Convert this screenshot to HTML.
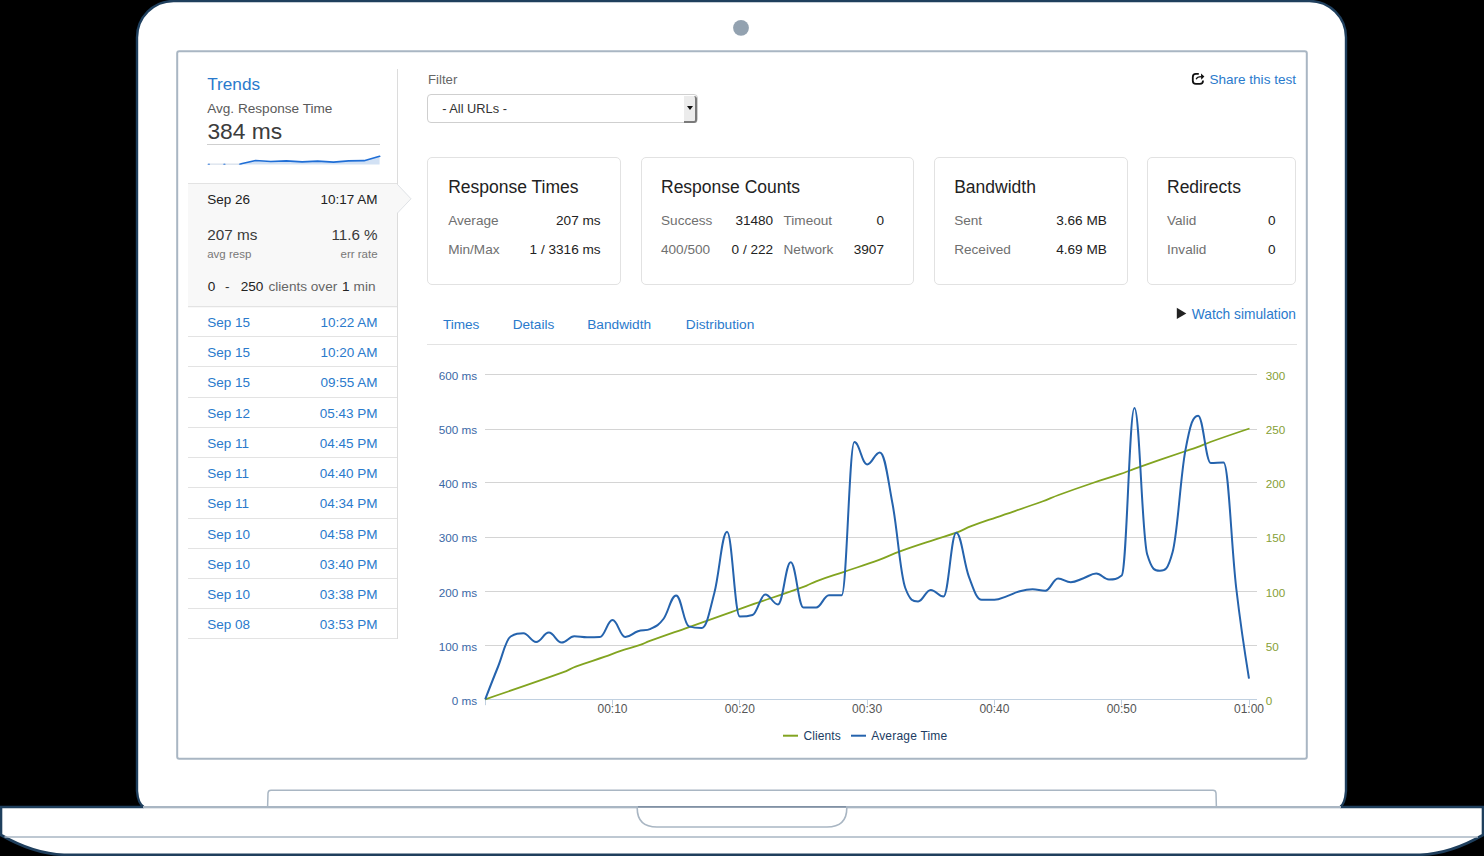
<!DOCTYPE html>
<html><head><meta charset="utf-8"><title>Load test report</title>
<style>
html,body{margin:0;padding:0;background:#000;}
body{width:1484px;height:856px;position:relative;overflow:hidden;font-family:"Liberation Sans", sans-serif;}
svg{position:absolute;left:0;top:0;}
.t{position:absolute;white-space:nowrap;line-height:1;}
</style></head><body>
<svg width="1484" height="856" viewBox="0 0 1484 856" font-family="Liberation Sans, sans-serif">
<path d="M1,807 L1483,807 L1483,835 Q1450,854 1420,854.8 L64,854.8 Q34,854 1,835 Z" fill="#fff" stroke="#1f3f5d" stroke-width="2.6"/>
<path d="M144,807 Q138,804 137,791 L137,37.5 A36.5,36.5 0 0 1 173.5,1 L1309.5,1 A36.5,36.5 0 0 1 1346,37.5 L1346,791 Q1345,804 1340,807" fill="#fff" stroke="#1f3f5d" stroke-width="2.4"/>
<line x1="144" y1="807" x2="1340" y2="807" stroke="#fff" stroke-width="3"/>
<line x1="143" y1="807" x2="1341" y2="807" stroke="#a9b6c3" stroke-width="1.8"/>
<line x1="4.5" y1="837" x2="1478" y2="837" stroke="#a9b6c3" stroke-width="1.6"/>
<path d="M267.6,807 L268,793 Q268.3,790.3 271,790.3 L1213,790.3 Q1215.7,790.3 1216,793 L1216.4,807" fill="none" stroke="#a9b6c3" stroke-width="1.5"/>
<path d="M637.2,807 L637.2,808 Q637.2,827 657,827 L827,827 Q846.8,827 846.8,808 L846.8,807" fill="#fff" stroke="#a9b6c3" stroke-width="1.6"/>
<line x1="638" y1="807" x2="846" y2="807" stroke="#73859a" stroke-width="1.6"/>
<circle cx="741" cy="27.8" r="7.9" fill="#93a2b0"/>
<rect x="177.2" y="51.2" width="1129.6" height="707.6" rx="2" fill="#fff" stroke="#a9b6c3" stroke-width="2"/>
<line x1="485" y1="374.5" x2="1257" y2="374.5" stroke="#d4d4d4" stroke-width="1"/>
<line x1="485" y1="429.5" x2="1257" y2="429.5" stroke="#d4d4d4" stroke-width="1"/>
<line x1="485" y1="482.5" x2="1257" y2="482.5" stroke="#d4d4d4" stroke-width="1"/>
<line x1="485" y1="537.5" x2="1257" y2="537.5" stroke="#d4d4d4" stroke-width="1"/>
<line x1="485" y1="591.5" x2="1257" y2="591.5" stroke="#d4d4d4" stroke-width="1"/>
<line x1="485" y1="645.5" x2="1257" y2="645.5" stroke="#d4d4d4" stroke-width="1"/>
<line x1="485" y1="699.5" x2="1257" y2="699.5" stroke="#c0d0e0" stroke-width="1"/>
<line x1="485.5" y1="699.5" x2="485.5" y2="705.2" stroke="#c0d0e0" stroke-width="1"/>
<line x1="612.5" y1="699.5" x2="612.5" y2="705.2" stroke="#c0d0e0" stroke-width="1"/>
<line x1="739.5" y1="699.5" x2="739.5" y2="705.2" stroke="#c0d0e0" stroke-width="1"/>
<line x1="867.5" y1="699.5" x2="867.5" y2="705.2" stroke="#c0d0e0" stroke-width="1"/>
<line x1="994.5" y1="699.5" x2="994.5" y2="705.2" stroke="#c0d0e0" stroke-width="1"/>
<line x1="1121.5" y1="699.5" x2="1121.5" y2="705.2" stroke="#c0d0e0" stroke-width="1"/>
<line x1="1249.5" y1="699.5" x2="1249.5" y2="705.2" stroke="#c0d0e0" stroke-width="1"/>
<path d="M485.20,699.30 C485.20,699.30 532.12,683.50 563.40,672.20 C568.32,670.42 570.78,668.43 575.70,666.60 C587.42,662.23 593.28,660.77 605.00,656.70 C611.00,654.61 614.00,653.21 620.00,651.20 C628.08,648.49 632.12,647.67 640.20,644.90 C643.80,643.67 645.60,642.51 649.20,641.20 C664.88,635.47 672.72,632.85 688.40,627.30 C704.12,621.73 711.98,619.01 727.70,613.40 C734.62,610.93 738.08,609.53 745.00,607.10 C769.48,598.49 781.72,594.68 806.20,585.80 C810.16,584.36 812.14,582.76 816.10,581.30 C827.30,577.16 832.90,575.60 844.10,571.80 C858.10,567.04 865.10,565.03 879.10,559.90 C887.46,556.83 891.64,554.35 900.00,551.30 C914.24,546.11 921.36,544.00 935.60,539.30 C943.88,536.56 948.02,535.75 956.30,532.70 C962.26,530.51 965.24,528.49 971.20,526.20 C981.28,522.33 986.32,520.80 996.40,517.30 C1014.76,510.92 1023.94,508.08 1042.30,501.50 C1048.82,499.16 1052.08,497.39 1058.60,495.00 C1072.24,489.99 1079.06,487.62 1092.70,483.00 C1103.62,479.30 1109.08,477.93 1120.00,474.20 C1125.96,472.17 1128.94,470.70 1134.90,468.60 C1154.74,461.62 1164.66,458.29 1184.50,451.50 C1189.66,449.73 1192.24,449.10 1197.40,447.20 C1202.56,445.30 1205.14,443.85 1210.30,442.00 C1225.98,436.37 1249.50,428.50 1249.50,428.50" fill="none" stroke="#82a420" stroke-width="1.8" stroke-linejoin="round"/>
<path d="M485.20,699.30 C485.20,699.30 492.84,679.56 497.93,667.00 C503.02,654.44 505.57,639.70 510.66,636.50 C515.75,633.30 518.30,633.30 523.39,633.30 C528.48,633.30 531.03,642.00 536.12,642.00 C541.21,642.00 543.76,632.60 548.85,632.60 C553.94,632.60 556.49,642.60 561.58,642.60 C566.67,642.60 569.22,636.30 574.31,636.30 C579.40,636.30 581.95,637.30 587.04,637.30 C592.13,637.30 594.68,637.30 599.77,637.10 C604.86,636.90 607.41,620.10 612.50,620.10 C617.59,620.10 620.14,637.00 625.23,637.00 C630.32,637.00 632.87,632.84 637.96,631.20 C643.05,629.56 645.60,631.20 650.69,628.80 C655.78,626.40 658.33,625.68 663.42,619.00 C668.51,612.32 671.06,595.40 676.15,595.40 C681.24,595.40 683.79,624.80 688.88,626.40 C693.97,628.00 696.52,628.00 701.61,628.00 C706.70,628.00 709.25,612.14 714.34,592.90 C719.43,573.66 721.98,531.80 727.07,531.80 C732.16,531.80 734.71,616.60 739.80,616.60 C744.89,616.60 747.44,616.60 752.53,615.00 C757.62,613.40 760.17,594.60 765.26,594.60 C770.35,594.60 772.90,604.40 777.99,604.40 C783.08,604.40 785.63,562.20 790.72,562.20 C795.81,562.20 798.36,607.50 803.45,607.50 C808.54,607.50 811.09,607.50 816.18,607.50 C821.27,607.50 823.82,595.30 828.91,595.30 C834.00,595.30 836.55,595.30 841.64,595.30 C846.73,595.30 849.28,442.10 854.37,442.10 C859.46,442.10 862.01,464.40 867.10,464.40 C872.19,464.40 874.74,452.40 879.83,452.40 C884.92,452.40 887.47,476.88 892.56,504.00 C897.65,531.12 900.20,574.60 905.29,588.00 C910.38,601.40 912.93,601.40 918.02,601.40 C923.11,601.40 925.66,589.90 930.75,589.90 C935.84,589.90 938.39,596.50 943.48,596.50 C948.57,596.50 951.12,532.80 956.21,532.80 C961.30,532.80 963.85,563.52 968.94,576.90 C974.03,590.28 976.58,599.60 981.67,599.70 C986.76,599.80 989.31,599.80 994.40,599.80 C999.49,599.80 1002.04,597.82 1007.13,596.10 C1012.22,594.38 1014.77,592.56 1019.86,591.20 C1024.95,589.84 1027.50,589.30 1032.59,589.30 C1037.68,589.30 1040.23,590.70 1045.32,590.70 C1050.41,590.70 1052.96,578.50 1058.05,578.50 C1063.14,578.50 1065.69,582.20 1070.78,582.20 C1075.87,582.20 1078.42,579.92 1083.51,578.20 C1088.60,576.48 1091.15,573.60 1096.24,573.60 C1101.33,573.60 1103.88,579.50 1108.97,579.50 C1114.06,579.50 1116.61,579.50 1121.70,575.50 C1126.79,571.50 1129.34,408.00 1134.43,408.00 C1139.52,408.00 1142.07,537.60 1147.16,554.20 C1152.25,570.80 1154.80,570.80 1159.89,570.80 C1164.98,570.80 1167.53,570.80 1172.62,552.00 C1177.71,533.20 1180.26,477.86 1185.35,450.60 C1190.44,423.34 1192.99,415.70 1198.08,415.70 C1203.17,415.70 1205.72,463.00 1210.81,463.00 C1215.90,463.00 1218.45,462.50 1223.54,462.50 C1228.63,462.50 1231.18,545.28 1236.27,588.50 C1241.36,631.72 1249.00,678.60 1249.00,678.60" fill="none" stroke="#2563ad" stroke-width="2"/>
<text x="477" y="379.9" font-size="11.7" fill="#3a68a6" text-anchor="end" >600 ms</text>
<text x="477" y="434.0" font-size="11.7" fill="#3a68a6" text-anchor="end" >500 ms</text>
<text x="477" y="488.2" font-size="11.7" fill="#3a68a6" text-anchor="end" >400 ms</text>
<text x="477" y="542.3" font-size="11.7" fill="#3a68a6" text-anchor="end" >300 ms</text>
<text x="477" y="596.5" font-size="11.7" fill="#3a68a6" text-anchor="end" >200 ms</text>
<text x="477" y="650.6" font-size="11.7" fill="#3a68a6" text-anchor="end" >100 ms</text>
<text x="477" y="704.8" font-size="11.7" fill="#3a68a6" text-anchor="end" >0 ms</text>
<text x="1265.8" y="379.9" font-size="11.7" fill="#86a036" text-anchor="start" >300</text>
<text x="1265.8" y="434.0" font-size="11.7" fill="#86a036" text-anchor="start" >250</text>
<text x="1265.8" y="488.2" font-size="11.7" fill="#86a036" text-anchor="start" >200</text>
<text x="1265.8" y="542.3" font-size="11.7" fill="#86a036" text-anchor="start" >150</text>
<text x="1265.8" y="596.5" font-size="11.7" fill="#86a036" text-anchor="start" >100</text>
<text x="1265.8" y="650.6" font-size="11.7" fill="#86a036" text-anchor="start" >50</text>
<text x="1265.8" y="704.8" font-size="11.7" fill="#86a036" text-anchor="start" >0</text>
<text x="612.5" y="713.2" font-size="12" fill="#555" text-anchor="middle" >00:10</text>
<text x="739.8" y="713.2" font-size="12" fill="#555" text-anchor="middle" >00:20</text>
<text x="867.1" y="713.2" font-size="12" fill="#555" text-anchor="middle" >00:30</text>
<text x="994.4" y="713.2" font-size="12" fill="#555" text-anchor="middle" >00:40</text>
<text x="1121.7" y="713.2" font-size="12" fill="#555" text-anchor="middle" >00:50</text>
<text x="1249.0" y="713.2" font-size="12" fill="#555" text-anchor="middle" >01:00</text>
<line x1="783" y1="735.7" x2="798" y2="735.7" stroke="#82a420" stroke-width="2"/>
<text x="803.5" y="739.8" font-size="12" fill="#203c63" text-anchor="start" letter-spacing="0.1">Clients</text>
<line x1="851" y1="735.7" x2="866" y2="735.7" stroke="#2563ad" stroke-width="2"/>
<text x="871.2" y="739.8" font-size="12" fill="#203c63" text-anchor="start" letter-spacing="0.2">Average Time</text>
<path d="M208.8,164.6 L240.1,164.0 L255.6,160.5 L270.8,161.5 L286.3,160.9 L302.1,161.8 L317.6,161.1 L333.5,162.2 L348.6,160.8 L364.1,160.7 L379.6,156.3 L379.6,164.6 Z" fill="#d2e1f4"/>
<path d="M240.1,164.0 L255.6,160.5 L270.8,161.5 L286.3,160.9 L302.1,161.8 L317.6,161.1 L333.5,162.2 L348.6,160.8 L364.1,160.7 L379.6,156.3" fill="none" stroke="#1f6ed6" stroke-width="1.7" stroke-linejoin="round" stroke-linecap="round"/>
<line x1="208.8" y1="164.2" x2="240.1" y2="164.2" stroke="#d9e1eb" stroke-width="1.3"/>
<ellipse cx="208.8" cy="164.2" rx="1.3" ry="0.8" fill="#5b93df"/>
<ellipse cx="224.4" cy="164.2" rx="1.3" ry="0.8" fill="#5b93df"/>
<ellipse cx="240.1" cy="164.2" rx="1.3" ry="0.8" fill="#5b93df"/>
</svg>
<div id="ui">
<div style="position:absolute;left:207px;top:144px;width:173px;height:1px;background:#cfcfcf"></div>
<div style="position:absolute;left:397px;top:69px;width:1px;height:570px;background:#dcdcdc"></div>
<div style="position:absolute;left:188px;top:183px;width:209px;height:123.5px;background:#f8f8f8;border-top:1px solid #e3e3e3"></div>
<div style="position:absolute;left:188px;top:306px;width:209px;height:1px;background:#e3e3e3"></div>
<div style="position:absolute;left:188px;top:336px;width:209px;height:1px;background:#e3e3e3"></div>
<div style="position:absolute;left:188px;top:366px;width:209px;height:1px;background:#e3e3e3"></div>
<div style="position:absolute;left:188px;top:397px;width:209px;height:1px;background:#e3e3e3"></div>
<div style="position:absolute;left:188px;top:427px;width:209px;height:1px;background:#e3e3e3"></div>
<div style="position:absolute;left:188px;top:457px;width:209px;height:1px;background:#e3e3e3"></div>
<div style="position:absolute;left:188px;top:487px;width:209px;height:1px;background:#e3e3e3"></div>
<div style="position:absolute;left:188px;top:518px;width:209px;height:1px;background:#e3e3e3"></div>
<div style="position:absolute;left:188px;top:548px;width:209px;height:1px;background:#e3e3e3"></div>
<div style="position:absolute;left:188px;top:578px;width:209px;height:1px;background:#e3e3e3"></div>
<div style="position:absolute;left:188px;top:608px;width:209px;height:1px;background:#e3e3e3"></div>
<div style="position:absolute;left:188px;top:638px;width:209px;height:1px;background:#e3e3e3"></div>
<div style="position:absolute;left:427px;top:94px;width:268.5px;height:27px;border:1px solid #cfcfcf;border-radius:4px;background:#fff"></div>
<div style="position:absolute;left:683.5px;top:95.5px;width:11px;height:25px;background:#ececec;border-right:2px solid #7a7a7a;border-bottom:2px solid #7a7a7a;border-radius:0 3px 3px 0"></div>
<div style="position:absolute;left:686.5px;top:106px;width:0;height:0;border-left:3px solid transparent;border-right:3px solid transparent;border-top:4px solid #111"></div>
<div style="position:absolute;left:427.0px;top:157px;width:192.0px;height:125.5px;border:1px solid #e2e2e2;border-radius:5px"></div>
<div style="position:absolute;left:641.0px;top:157px;width:270.5px;height:125.5px;border:1px solid #e2e2e2;border-radius:5px"></div>
<div style="position:absolute;left:934.0px;top:157px;width:191.5px;height:125.5px;border:1px solid #e2e2e2;border-radius:5px"></div>
<div style="position:absolute;left:1147.0px;top:157px;width:147.0px;height:125.5px;border:1px solid #e2e2e2;border-radius:5px"></div>
<div style="position:absolute;left:427px;top:344px;width:869.5px;height:1px;background:#e3e3e3"></div>
</div>
<svg width="1484" height="856" viewBox="0 0 1484 856" font-family="Liberation Sans, sans-serif">
<path d="M396.6,184.8 L397.8,184.8 L411,198.8 L397.8,212.8 L396.6,212.8 Z" fill="#f8f8f8"/>
<path d="M397.5,184.5 L411,198.8 L397.5,213" fill="none" stroke="#dfe2e6" stroke-width="1"/>
<path d="M1176.8,307.8 L1186.3,313.4 L1176.8,319 Z" fill="#222"/>
<path d="M1198.8,73.8 L1195.9,73.8 Q1192.8,73.8 1192.8,76.9 L1192.8,80.7 Q1192.8,83.8 1195.9,83.8 L1199.9,83.8 Q1203,83.8 1203,80.7 L1203,80.4" fill="none" stroke="#111" stroke-width="1.8"/>
<path d="M1196.2,79.2 Q1197,76.6 1201.6,76.6" fill="none" stroke="#111" stroke-width="1.35"/>
<path d="M1201,73.6 L1204.4,76.6 L1201.2,79.8 Z" fill="#111"/>
<text x="207.2" y="89.9" font-size="17.2" fill="#2a7acc" text-anchor="start">Trends</text>
<text x="207.2" y="112.8" font-size="13.6" fill="#5a5a5a" text-anchor="start">Avg. Response Time</text>
<text x="207.4" y="139.3" font-size="22.8" fill="#3c3c3c" text-anchor="start">384 ms</text>
<text x="207.2" y="204.1" font-size="13.5" fill="#222" text-anchor="start">Sep 26</text>
<text x="377.6" y="204.1" font-size="13.5" fill="#222" text-anchor="end">10:17 AM</text>
<text x="207.2" y="239.8" font-size="15.3" fill="#3a3a3a" text-anchor="start">207 ms</text>
<text x="377.6" y="239.8" font-size="15.2" fill="#3a3a3a" text-anchor="end">11.6 %</text>
<text x="207.2" y="258.3" font-size="11.5" fill="#777" text-anchor="start">avg resp</text>
<text x="377.6" y="258.3" font-size="11.5" fill="#777" text-anchor="end">err rate</text>
<text x="207.7" y="291.1" font-size="13.6" fill="#222" text-anchor="start">0</text>
<text x="225" y="291.1" font-size="13.6" fill="#333" text-anchor="start">-</text>
<text x="240.7" y="291.1" font-size="13.6" fill="#222" text-anchor="start">250</text>
<text x="268.5" y="291.1" font-size="13.6" fill="#666" text-anchor="start">clients over</text>
<text x="342.1" y="291.1" font-size="13.6" fill="#222" text-anchor="start">1</text>
<text x="353.6" y="291.1" font-size="13.6" fill="#666" text-anchor="start">min</text>
<text x="207.2" y="326.5" font-size="13.5" fill="#2a7acc" text-anchor="start">Sep 15</text>
<text x="377.6" y="326.5" font-size="13.5" fill="#2a7acc" text-anchor="end">10:22 AM</text>
<text x="207.2" y="356.5" font-size="13.5" fill="#2a7acc" text-anchor="start">Sep 15</text>
<text x="377.6" y="356.5" font-size="13.5" fill="#2a7acc" text-anchor="end">10:20 AM</text>
<text x="207.2" y="386.5" font-size="13.5" fill="#2a7acc" text-anchor="start">Sep 15</text>
<text x="377.6" y="386.5" font-size="13.5" fill="#2a7acc" text-anchor="end">09:55 AM</text>
<text x="207.2" y="417.5" font-size="13.5" fill="#2a7acc" text-anchor="start">Sep 12</text>
<text x="377.6" y="417.5" font-size="13.5" fill="#2a7acc" text-anchor="end">05:43 PM</text>
<text x="207.2" y="447.5" font-size="13.5" fill="#2a7acc" text-anchor="start">Sep 11</text>
<text x="377.6" y="447.5" font-size="13.5" fill="#2a7acc" text-anchor="end">04:45 PM</text>
<text x="207.2" y="477.5" font-size="13.5" fill="#2a7acc" text-anchor="start">Sep 11</text>
<text x="377.6" y="477.5" font-size="13.5" fill="#2a7acc" text-anchor="end">04:40 PM</text>
<text x="207.2" y="507.5" font-size="13.5" fill="#2a7acc" text-anchor="start">Sep 11</text>
<text x="377.6" y="507.5" font-size="13.5" fill="#2a7acc" text-anchor="end">04:34 PM</text>
<text x="207.2" y="538.5" font-size="13.5" fill="#2a7acc" text-anchor="start">Sep 10</text>
<text x="377.6" y="538.5" font-size="13.5" fill="#2a7acc" text-anchor="end">04:58 PM</text>
<text x="207.2" y="568.5" font-size="13.5" fill="#2a7acc" text-anchor="start">Sep 10</text>
<text x="377.6" y="568.5" font-size="13.5" fill="#2a7acc" text-anchor="end">03:40 PM</text>
<text x="207.2" y="598.5" font-size="13.5" fill="#2a7acc" text-anchor="start">Sep 10</text>
<text x="377.6" y="598.5" font-size="13.5" fill="#2a7acc" text-anchor="end">03:38 PM</text>
<text x="207.2" y="628.5" font-size="13.5" fill="#2a7acc" text-anchor="start">Sep 08</text>
<text x="377.6" y="628.5" font-size="13.5" fill="#2a7acc" text-anchor="end">03:53 PM</text>
<text x="428" y="83.9" font-size="13.2" fill="#666" text-anchor="start">Filter</text>
<text x="442.2" y="112.9" font-size="12.8" fill="#333" text-anchor="start">- All URLs -</text>
<text x="1296" y="83.9" font-size="13.55" fill="#2a7acc" text-anchor="end">Share this test</text>
<text x="448.2" y="193.2" font-size="17.5" fill="#222" text-anchor="start">Response Times</text>
<text x="448.2" y="225" font-size="13.6" fill="#707070" text-anchor="start">Average</text>
<text x="600.6" y="225" font-size="13.6" fill="#222" text-anchor="end">207 ms</text>
<text x="448.2" y="254" font-size="13.6" fill="#707070" text-anchor="start">Min/Max</text>
<text x="600.6" y="254" font-size="13.6" fill="#222" text-anchor="end">1 / 3316 ms</text>
<text x="661" y="193.2" font-size="17.5" fill="#222" text-anchor="start">Response Counts</text>
<text x="661" y="225" font-size="13.6" fill="#707070" text-anchor="start">Success</text>
<text x="773.2" y="225" font-size="13.6" fill="#222" text-anchor="end">31480</text>
<text x="783.5" y="225" font-size="13.6" fill="#707070" text-anchor="start">Timeout</text>
<text x="884" y="225" font-size="13.6" fill="#222" text-anchor="end">0</text>
<text x="661" y="254" font-size="13.6" fill="#707070" text-anchor="start">400/500</text>
<text x="773.2" y="254" font-size="13.6" fill="#222" text-anchor="end">0 / 222</text>
<text x="783.5" y="254" font-size="13.6" fill="#707070" text-anchor="start">Network</text>
<text x="884" y="254" font-size="13.6" fill="#222" text-anchor="end">3907</text>
<text x="954.2" y="193.2" font-size="17.5" fill="#222" text-anchor="start">Bandwidth</text>
<text x="954.2" y="225" font-size="13.6" fill="#707070" text-anchor="start">Sent</text>
<text x="1106.8" y="225" font-size="13.6" fill="#222" text-anchor="end">3.66 MB</text>
<text x="954.2" y="254" font-size="13.6" fill="#707070" text-anchor="start">Received</text>
<text x="1106.8" y="254" font-size="13.6" fill="#222" text-anchor="end">4.69 MB</text>
<text x="1167" y="193.2" font-size="17.5" fill="#222" text-anchor="start">Redirects</text>
<text x="1167" y="225" font-size="13.6" fill="#707070" text-anchor="start">Valid</text>
<text x="1275.5" y="225" font-size="13.6" fill="#222" text-anchor="end">0</text>
<text x="1167" y="254" font-size="13.6" fill="#707070" text-anchor="start">Invalid</text>
<text x="1275.5" y="254" font-size="13.6" fill="#222" text-anchor="end">0</text>
<text x="442.9" y="329.3" font-size="13.6" fill="#2a7acc" text-anchor="start">Times</text>
<text x="512.7" y="329.3" font-size="13.6" fill="#2a7acc" text-anchor="start">Details</text>
<text x="587.2" y="329.3" font-size="13.7" fill="#2a7acc" text-anchor="start">Bandwidth</text>
<text x="685.8" y="329.3" font-size="13.7" fill="#2a7acc" text-anchor="start">Distribution</text>
<text x="1296" y="318.6" font-size="13.75" fill="#2a7acc" text-anchor="end">Watch simulation</text>
</svg>
</body></html>
